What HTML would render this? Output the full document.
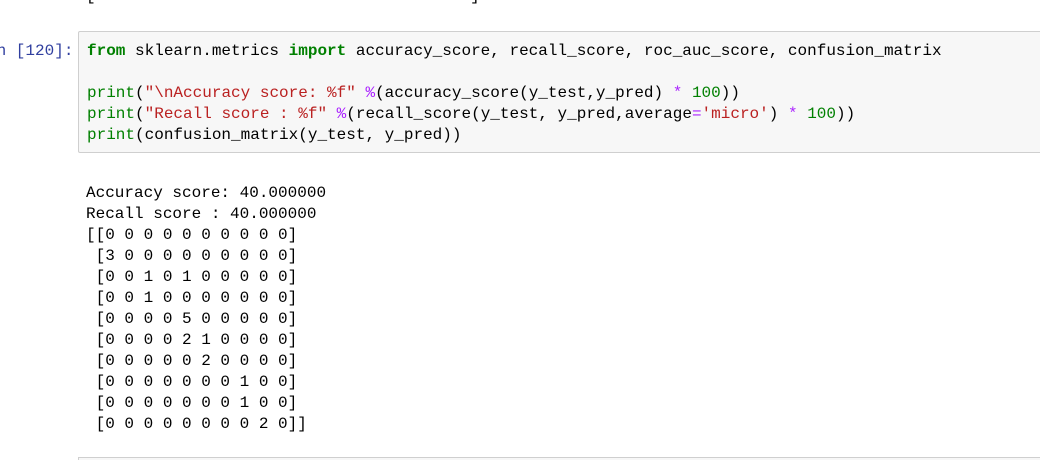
<!DOCTYPE html>
<html style="height:460px;overflow:hidden"><head><style>
body{margin:0;width:1040px;height:460px;background:#fff;overflow:hidden;position:relative;font-family:"Liberation Mono",monospace;font-size:16px;}
.l{position:absolute;white-space:pre;line-height:21px;}
.box{position:absolute;left:78px;top:31px;width:980px;height:120px;background:#f7f7f7;border:1px solid #cfcfcf;border-radius:2px;}
.box2{position:absolute;left:78px;top:457px;width:980px;height:3px;background:#f7f7f7;border-top:1px solid #cfcfcf;border-left:1px solid #cfcfcf;}
.k{color:#008000;font-weight:bold}.b{color:#008000}.s{color:#BA2121}.o{color:#AA22FF}.n{color:#008000}
</style></head><body>
<div class="l" style="left:86px;top:-14px">[0 0 5 5 5 5 5 0 1 0 1 5 5 1 0 5 5 5 5 5]</div>
<div class="box"></div>
<div class="l" style="left:-13px;top:41px;color:#303F9F">In [120]:</div>
<div class="l" style="left:87px;top:41px"><span class="k">from</span> sklearn.metrics <span class="k">import</span> accuracy_score, recall_score, roc_auc_score, confusion_matrix</div>
<div class="l" style="left:87px;top:83px"><span class="b">print</span>(<span class="s">"\nAccuracy score: %f"</span> <span class="o">%</span>(accuracy_score(y_test,y_pred) <span class="o">*</span> <span class="n">100</span>))</div>
<div class="l" style="left:87px;top:104px"><span class="b">print</span>(<span class="s">"Recall score : %f"</span> <span class="o">%</span>(recall_score(y_test, y_pred,average<span class="o">=</span><span class="s">'micro'</span>) <span class="o">*</span> <span class="n">100</span>))</div>
<div class="l" style="left:87px;top:125px"><span class="b">print</span>(confusion_matrix(y_test, y_pred))</div>
<div class="l" style="left:86px;top:183px;color:#000">Accuracy score: 40.000000
Recall score : 40.000000
[[0 0 0 0 0 0 0 0 0 0]
 [3 0 0 0 0 0 0 0 0 0]
 [0 0 1 0 1 0 0 0 0 0]
 [0 0 1 0 0 0 0 0 0 0]
 [0 0 0 0 5 0 0 0 0 0]
 [0 0 0 0 2 1 0 0 0 0]
 [0 0 0 0 0 2 0 0 0 0]
 [0 0 0 0 0 0 0 1 0 0]
 [0 0 0 0 0 0 0 1 0 0]
 [0 0 0 0 0 0 0 0 2 0]]</div>
<div class="box2"></div>
</body></html>
